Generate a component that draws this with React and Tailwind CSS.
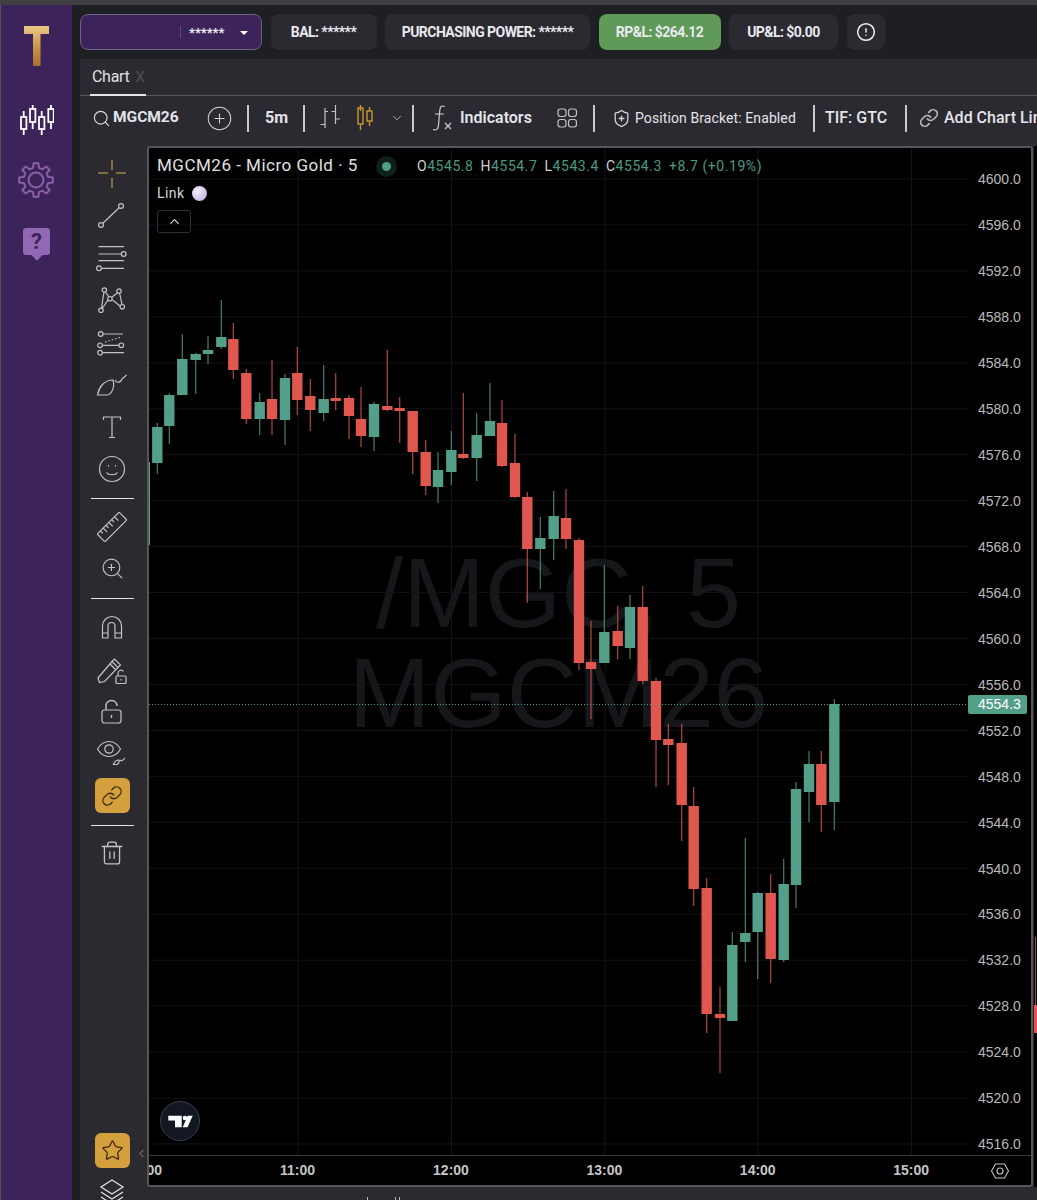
import { Search, CirclePlus, ChevronDown, ChevronUp, ChevronLeft, ShieldPlus, Link as LinkIcon, CircleAlert, Trash2, Star, ZoomIn } from 'lucide-react';

const roboto = "font-['Roboto',sans-serif]";
const arial = "font-['Liberation_Sans',sans-serif]";

// [color, x, wickTop, bodyTop, bodyBottom, wickBottom]
const candles = [
  ['g', 157.3, 423, 427, 463, 474], ['g', 169.3, 393, 395, 426, 444], ['g', 182.3, 334, 359, 395, 395],
  ['g', 195.7, 353, 354, 360, 394], ['g', 208, 336, 350, 354, 364], ['g', 221.3, 300, 337, 347, 349],
  ['r', 233.3, 323, 339, 370, 379], ['r', 246.3, 369, 373, 419, 424], ['g', 259.7, 393, 402, 419, 435],
  ['r', 272, 360, 399, 419, 435], ['g', 285, 374, 378, 420, 445], ['r', 297.3, 347, 373, 400, 415],
  ['r', 310.3, 379, 396, 410, 431], ['g', 323.7, 365, 399, 413, 421], ['r', 335.7, 373, 398, 401, 410],
  ['r', 349, 395, 398, 416, 439], ['r', 361, 387, 419, 436, 447], ['g', 374, 402, 404, 437, 451],
  ['r', 387.3, 350, 406, 410, 411], ['r', 399.7, 397, 408, 411, 443], ['r', 412.7, 411, 411, 452, 474],
  ['r', 425.7, 440, 452, 486, 495], ['g', 438, 452, 470, 487, 503], ['g', 451.3, 431, 450, 472, 485],
  ['r', 463.3, 393, 454, 458, 459], ['g', 476.7, 413, 435, 458, 481], ['g', 490, 383, 421, 436, 436],
  ['r', 502, 400, 423, 466, 467], ['r', 515, 434, 463, 497, 498], ['r', 527.3, 492, 497, 549, 603],
  ['g', 540.3, 517, 538, 549, 589], ['g', 553.7, 491, 516, 539, 560], ['r', 566, 489, 518, 539, 549],
  ['r', 579, 538, 540, 663, 670], ['r', 591, 621, 662, 669, 719], ['g', 604.3, 565, 632, 663, 663],
  ['r', 617.7, 606, 631, 646, 659], ['g', 630, 595, 607, 648, 659], ['r', 642.7, 586, 607, 681, 684],
  ['r', 656, 678, 681, 740, 787], ['r', 668.3, 724, 739, 745, 785], ['r', 681.7, 724, 743, 805, 841],
  ['r', 693.7, 787, 806, 889, 906], ['r', 706.7, 878, 888, 1014, 1033], ['r', 720, 987, 1014, 1018, 1073],
  ['g', 732.3, 932, 945, 1021, 1021], ['g', 745.3, 838, 933, 942, 962], ['g', 757.7, 892, 893, 932, 979],
  ['r', 770.7, 874, 893, 959, 983], ['g', 783.7, 859, 884, 960, 962], ['g', 796, 782, 789, 885, 908],
  ['g', 809, 751, 764, 792, 822], ['r', 821.3, 751, 764, 805, 832], ['g', 834.3, 699, 704, 802, 830],
];

const prices = ['4600.0', '4596.0', '4592.0', '4588.0', '4584.0', '4580.0', '4576.0', '4572.0', '4568.0', '4564.0', '4560.0', '4556.0', '4552.0', '4548.0', '4544.0', '4540.0', '4536.0', '4532.0', '4528.0', '4524.0', '4520.0', '4516.0'];

function gearPath(cx, cy, outer, inner, teeth) {
  let d = '';
  const step = (Math.PI * 2) / teeth;
  for (let i = 0; i < teeth; i++) {
    const a = i * step - Math.PI / 2;
    const pts = [[inner, a - step * 0.3], [outer, a - step * 0.18], [outer, a + step * 0.18], [inner, a + step * 0.3]];
    pts.forEach(([r, t]) => {
      d += `${d ? 'L' : 'M'}${(cx + r * Math.cos(t)).toFixed(2)} ${(cy + r * Math.sin(t)).toFixed(2)} `;
    });
  }
  return d + 'Z';
}

function Ico({ children, className = '' }) {
  return (
    <svg viewBox="0 0 36 36" fill="none" stroke="currentColor" strokeWidth="1.2" className={`w-9 h-9 shrink-0 text-[#c4c4c6] ${className}`}>
      {children}
    </svg>
  );
}

function Sep({ className = '' }) {
  return <div className={`w-[2px] h-[27px] bg-[#c9c9cc] shrink-0 ${className}`} />;
}

function ToolSep({ className = '' }) {
  return <div className={`w-[43px] h-px bg-[#e8e0e6] shrink-0 ${className}`} />;
}

function Pill({ className = '', children }) {
  return (
    <div className={`h-9 rounded-lg bg-[#2a2a30] flex items-center justify-center text-[14px] font-bold tracking-[-0.55px] text-[#e9e9ee] shrink-0 ${className}`}>
      {children}
    </div>
  );
}

function Sidebar() {
  return (
    <div className="w-[72px] h-full bg-[#3c2359] border-l border-[#55525c] shrink-0">
      <svg viewBox="0 0 71 70" className="w-[71px] h-[70px] mt-[16px]">
        <defs>
          <linearGradient id="goldT" x1="0" y1="0" x2="0" y2="1">
            <stop offset="0" stopColor="#edca86" />
            <stop offset="0.5" stopColor="#c9974f" />
            <stop offset="1" stopColor="#a8702f" />
          </linearGradient>
        </defs>
        <path d="M23 5 H48 V13 H39.5 V45 H32 V13 H23 Z" fill="url(#goldT)" />
      </svg>
      <svg viewBox="0 0 36 32" fill="none" stroke="#fff" strokeWidth="1.8" className="w-9 h-8 ml-[17px] mt-[14px]">
        <path d="M5.7 6V30 M14.7 0V24 M23.7 6V30 M33 0V24" />
        <rect x="3" y="12" width="5.4" height="12" fill="#3c2359" />
        <rect x="12" y="4" width="5.4" height="13" fill="#3c2359" />
        <rect x="21" y="12" width="5.4" height="12" fill="#3c2359" />
        <rect x="30.3" y="4" width="5.4" height="13" fill="#3c2359" />
      </svg>
      <svg viewBox="0 0 40 40" fill="none" stroke="#8a5fa8" strokeWidth="2" className="w-10 h-10 ml-[15px] mt-[23px]">
        <path d={gearPath(20, 20, 17, 12.5, 8)} strokeLinejoin="round" />
        <circle cx="20" cy="20" r="7.5" />
      </svg>
      <div className="relative w-[27px] h-[27px] ml-[22px] mt-[28px] rounded-[3px] bg-[#9268b4] flex items-center justify-center">
        <span className={`${roboto} text-[#3c2359] text-[22px] font-bold leading-none`}>?</span>
        <div className="absolute -bottom-[4px] left-[10px] w-[8px] h-[8px] rotate-45 bg-[#9268b4]" />
      </div>
    </div>
  );
}

function TopBar() {
  return (
    <div className={`${roboto} h-[54px] flex items-center gap-[8.5px] pl-[8px] bg-[#1e1f23]`}>
      <div className="w-[182px] h-9 rounded-lg bg-[#3c2359] border border-[#6f6085] flex items-center shrink-0">
        <div className="ml-[99px] w-px h-[12px] bg-[#5d4a74]" />
        <span className="ml-[8px] w-[36px] text-[13px] font-bold leading-none text-[#f0eef4]">******</span>
        <div className="ml-[15px] mt-[2px] w-0 h-0 border-x-[4px] border-x-transparent border-t-[4px] border-t-white" />
      </div>
      <Pill className="w-[106px]">BAL:&nbsp;******</Pill>
      <Pill className="w-[205px]">PURCHASING POWER:&nbsp;******</Pill>
      <Pill className="w-[122px] !bg-[#5f9a58]">RP&amp;L: $264.12</Pill>
      <Pill className="w-[109px]">UP&amp;L: $0.00</Pill>
      <Pill className="w-[38px]"><CircleAlert size={20} color="#f2f2f2" strokeWidth={1.8} /></Pill>
    </div>
  );
}

function ChartToolbar() {
  return (
    <div className={`${roboto} h-[50px] pb-[6px] flex items-center text-[#e4e4ea] overflow-hidden whitespace-nowrap`}>
      <Search size={19} strokeWidth={1.5} className="ml-[12px] shrink-0" color="#d8d8dc" />
      <span className="ml-[2px] w-[65px] text-[15.5px] font-bold shrink-0">MGCM26</span>
      <CirclePlus size={27} strokeWidth={0.9} className="ml-[28px] shrink-0" color="#d8d8dc" />
      <Sep className="ml-[14px]" />
      <span className="ml-[16px] w-[24px] text-[16px] font-bold shrink-0">5m</span>
      <Sep className="ml-[14px]" />
      <svg viewBox="0 0 22 26" fill="none" stroke="#c4c4c6" strokeWidth="1.2" className="w-[22px] h-[26px] ml-[14px] shrink-0">
        <path d="M6 3V23 M1.5 19.5H6 M6 6.5H9 M16.5 0V19 M12.5 6.5H16.5 M16.5 14H21" />
      </svg>
      <svg viewBox="0 0 18 26" fill="none" stroke="#c9972f" strokeWidth="1.4" className="w-[18px] h-[26px] ml-[16px] shrink-0">
        <path d="M3.5 0V6 M3.5 19V25 M12.5 2V6 M12.5 16V21" />
        <rect x="1" y="3" width="5" height="16" />
        <rect x="10" y="6" width="5" height="10" />
      </svg>
      <ChevronDown size={14} strokeWidth={1.5} color="#c4c4c6" className="ml-[15px] shrink-0" />
      <Sep className="ml-[8px]" />
      <svg viewBox="0 0 26 28" fill="none" stroke="#d0d0d2" strokeWidth="1.2" className="w-[26px] h-[28px] ml-[16px] shrink-0">
        <path d="M15 2.5C11 1 10 3 9.7 7L8.5 21C8.2 25 7 26.5 3 25.5 M5 10H14 M15 19L21 25 M21 19L15 25" />
      </svg>
      <span className="ml-[4px] w-[73px] text-[16px] font-semibold shrink-0">Indicators</span>
      <svg viewBox="0 0 20 20" fill="none" stroke="#c4c4c6" strokeWidth="1.2" className="w-5 h-5 ml-[24px] shrink-0">
        <rect x="1" y="1" width="8" height="7.5" rx="2.4" />
        <rect x="11.5" y="1" width="8" height="7.5" rx="2.4" />
        <rect x="1" y="11.5" width="8" height="7.5" rx="2.4" />
        <rect x="11.5" y="11.5" width="8" height="7.5" rx="2.4" />
      </svg>
      <Sep className="ml-[16px]" />
      <ShieldPlus size={19} strokeWidth={1.6} color="#d8d8dc" className="ml-[17px] shrink-0" />
      <span className="ml-[4px] w-[162px] text-[14px] shrink-0 tracking-[0.1px]">Position Bracket: Enabled</span>
      <Sep className="ml-[16px]" />
      <span className="ml-[10px] w-[64px] text-[16px] font-medium shrink-0">TIF: GTC</span>
      <Sep className="ml-[16px]" />
      <LinkIcon size={20} strokeWidth={2} color="#b9b9bc" className="ml-[12px] shrink-0" />
      <span className="ml-[5px] text-[16px] font-medium shrink-0">Add Chart Link</span>
    </div>
  );
}

function ToolColumn() {
  return (
    <div className="relative w-[67px] pr-[3px] shrink-0 flex flex-col items-center">
      <Ico className="mt-[9px] !text-[#a5813f]">
        <path d="M4 18H14 M22 18H32 M18 5V15 M18 23V33" strokeWidth="1.5" />
      </Ico>
      <Ico className="mt-[6px]">
        <circle cx="7" cy="28" r="2.4" /><circle cx="27" cy="9" r="2.4" /><path d="M8.8 26.2L25.2 10.8" />
      </Ico>
      <Ico className="mt-[7px]">
        <path d="M4.5 6.7H30 M4.5 14H27 M4.5 20.7H30 M7.5 28.3H30" />
        <circle cx="29.7" cy="14" r="2.4" /><circle cx="5" cy="28.3" r="2.4" />
      </Ico>
      <Ico className="mt-[6px]">
        <path d="M7.5 26L10 10 M11.5 10L15 15 M18 15L24 10.5 M25.6 11L28 22.5 M26 24L18.5 18 M14 18L8.5 26" />
        <circle cx="10.3" cy="8" r="2.2" /><circle cx="25" cy="9" r="2.2" /><circle cx="16" cy="16.7" r="2.2" />
        <circle cx="7" cy="28.3" r="2.2" /><circle cx="28.3" cy="24.7" r="2.2" />
      </Ico>
      <Ico className="mt-[7px]">
        <path d="M9 9H29 M9 20.3H25 M9 27.7H30" />
        <circle cx="6.7" cy="9" r="2.3" /><circle cx="6" cy="20.3" r="2.3" /><circle cx="27.3" cy="20.3" r="2.3" /><circle cx="6" cy="27.7" r="2.3" />
        <path d="M11 17L27.5 12" strokeDasharray="1.5 2" />
      </Ico>
      <Ico className="mt-[6px]">
        <path d="M3.5 28C5 20 10 13 19 13C21 20 18 28 12 28H3.5Z M21 13C23 17 27 15 28 12L32.5 8" />
      </Ico>
      <Ico className="mt-[7px]">
        <path d="M9.5 10V7H26.5V10 M18 7V27 M15 27.5H21" />
      </Ico>
      <Ico className="mt-[5px]">
        <circle cx="18" cy="18" r="12.5" /><path d="M12.5 21.5C14.5 24.5 21.5 24.5 23.5 21.5 M14.5 14V15.5 M21.5 14V15.5" />
      </Ico>
      <ToolSep className="mt-[11px]" />
      <Ico className="mt-[10px]">
        <g transform="rotate(-45 18 18)">
          <rect x="2.5" y="12.5" width="31" height="11" rx="1" />
          <path d="M7 12.5V16 M11 12.5V18 M15 12.5V16 M19 12.5V18 M23 12.5V16 M27 12.5V18" />
        </g>
      </Ico>
      <div className="w-9 h-9 mt-[5px] shrink-0 flex items-center justify-center">
        <ZoomIn size={25} strokeWidth={1.1} color="#c4c4c6" />
      </div>
      <ToolSep className="mt-[12px]" />
      <Ico className="mt-[10px]">
        <path d="M8.5 29V17a9.5 9.5 0 0 1 19 0V29H21V17a3.5 3.5 0 0 0 -7 0V29Z M8.5 24H14 M21 24H27.5" />
      </Ico>
      <Ico className="mt-[7px]">
        <path d="M4 26L5.5 30.5L10.5 29.5L24 15.5L18 9.5Z M16 12L21.5 17.5 M18 9.5L20.5 7L26.5 13L24 15.5" />
        <rect x="22" y="24" width="10" height="7.5" rx="1" fill="#2a2a30" />
        <path d="M24 24V21a3 3 0 0 1 5.5 -1.5 M27 27V28.5" />
      </Ico>
      <Ico className="mt-[7px]">
        <rect x="8" y="15" width="19" height="13" rx="2.5" /><path d="M12 15V11a5.5 5.5 0 0 1 11 0 M17.5 20V23" strokeWidth="1.4" />
      </Ico>
      <Ico className="mt-[4px]">
        <path d="M3.5 14C7 8 11 6.5 15 6.5C19 6.5 23 8 26.5 14C23 20 19 21.5 15 21.5C11 21.5 7 20 3.5 14Z" /><circle cx="15" cy="14" r="4.2" />
        <path d="M19.5 29.5C20.5 26 22.5 25 25 25C25.5 27.5 24 29.5 22.5 29.5Z M26 25C27 26.5 29 25.5 31 23" />
      </Ico>
      <div className="w-[35px] h-[35px] mt-[7px] rounded-md bg-[#d4a03e] flex items-center justify-center shrink-0">
        <LinkIcon size={22} strokeWidth={1.4} color="#35280f" />
      </div>
      <ToolSep className="mt-[12px]" />
      <div className="w-9 h-9 mt-[9px] shrink-0 flex items-center justify-center">
        <Trash2 size={26} strokeWidth={1.2} color="#c4c4c6" />
      </div>
      <div className="w-[35px] h-[35px] mt-[262px] rounded-md bg-[#d4a03e] flex items-center justify-center shrink-0">
        <Star size={23} strokeWidth={1.3} color="#35280f" />
      </div>
      <Ico className="mt-[4px] !text-[#e6e6e8]">
        <path d="M18 8L29 15L18 22L7 15Z M7 20L18 27L29 20 M7 25L18 32L29 25" />
      </Ico>
      <ChevronLeft size={13} strokeWidth={1.5} color="#a8a8ac" className="absolute left-[55px] top-[1001px]" />
    </div>
  );
}

function Plot() {
  return (
    <div className="relative w-[819px] h-[1007px] shrink-0 overflow-hidden">
      <div className={`${arial} absolute left-0 top-[395px] w-full text-center text-[98px] leading-[100px] text-[#16171a]`}>
        <div>/MGC, 5</div>
        <div>MGCM26</div>
      </div>
      <svg viewBox="149 148 819 1007" className="absolute inset-0 w-full h-full">
        {prices.map((p, i) => (
          <rect key={p} x="149" y={178.5 + i * 45.95} width="819" height="1" fill="#14151a" fillOpacity="0.85" />
        ))}
        {[297.5, 451, 604.5, 757.5, 911].map((x) => (
          <rect key={x} x={x} y="148" width="1" height="1007" fill="#14151a" />
        ))}
        <rect x="149" y="462" width="1" height="83" fill="#549f89" />
        {candles.map(([c, x, wt, bt, bb, wb]) => (
          <g key={x} fill={c === 'g' ? '#549f89' : '#df574f'}>
            <rect x={x - 0.6} y={wt} width="1.2" height={wb - wt} fillOpacity="0.8" />
            <rect x={x - 5.2} y={bt} width="10.4" height={bb - bt} />
          </g>
        ))}
        <line x1="149" y1="704.5" x2="968" y2="704.5" stroke="#549f89" strokeDasharray="1 2" />
      </svg>

      <div className={`${roboto} absolute left-[8px] top-[5px] flex items-center h-[26px] whitespace-nowrap`}>
        <span className="w-[219px] text-[17px] text-[#e0e0e0] tracking-[0.5px]">MGCM26 - Micro Gold · 5</span>
        <span className="w-[21px] h-[21px] rounded-full bg-[#0f1f1c] flex items-center justify-center">
          <span className="w-[9px] h-[9px] rounded-full bg-[#4f9f88]" />
        </span>
        <span className="ml-[20px] text-[14px] tracking-[0.55px] text-[#4a9a83]">
          <span className="text-[#cfcfcf]">O</span>4545.8 <span className="text-[#cfcfcf] ml-[3px]">H</span>4554.7 <span className="text-[#cfcfcf] ml-[3px]">L</span>4543.4 <span className="text-[#cfcfcf] ml-[3px]">C</span>4554.3 <span className="ml-[3px]">+8.7 (+0.19%)</span>
        </span>
      </div>
      <div className={`${roboto} absolute left-[8px] top-[35px] flex items-center`}>
        <span className="text-[14px] text-[#d6d6d6] tracking-[0.4px]">Link</span>
        <span className="ml-[8px] w-[15px] h-[15px] rounded-full bg-[radial-gradient(circle_at_35%_35%,#f4eefa,#bba6dc)]" />
      </div>
      <div className="absolute left-[8px] top-[62px] w-[34px] h-[23px] rounded-[3px] border border-[#2c2f38] flex items-center justify-center">
        <ChevronUp size={15} strokeWidth={1.8} color="#e4e4e4" />
      </div>
      <svg viewBox="0 0 40 40" className="absolute left-[11px] top-[953px] w-10 h-10">
        <circle cx="20" cy="20" r="19.5" fill="#131722" stroke="#3a3f4d" />
        <path d="M8.3 14.7H21.7V26.3H15V19.5H8.3Z M27.7 14.7H32.7L27.5 26.3H22.7Z" fill="#fff" />
        <circle cx="25" cy="17" r="2.3" fill="#fff" />
      </svg>
    </div>
  );
}

function ChartFrame() {
  return (
    <div className="w-[886px] h-[1041px] shrink-0 border-2 border-[#55555a] rounded-[3px] bg-black flex flex-col overflow-hidden">
      <div className="flex h-[1007px] shrink-0">
        <Plot />
        <div className={`${arial} relative flex-1 pt-[9px] text-[14px] text-[#b9b9bb]`}>
          {prices.map((p) => (
            <div key={p} className="h-[45.95px] flex items-center pl-[10px]">{p}</div>
          ))}
          <div className="absolute left-0 top-[547px] w-[59px] h-[19px] rounded-[2px] bg-[#549f89] text-white flex items-center pl-[10px]">4554.3</div>
        </div>
      </div>
      <div className="flex flex-1 border-t border-[#36363b]">
        <div className={`${arial} w-[819px] flex items-center overflow-hidden text-[14px] font-bold text-[#c6c6c8]`}>
          {['10:00', '11:00', '12:00', '13:00', '14:00', '15:00'].map((t, i) => (
            <div key={t} className={`w-[153.4px] shrink-0 text-center ${i === 0 ? 'ml-[-81.5px]' : ''}`}>{t}</div>
          ))}
        </div>
        <div className="flex-1 flex items-center justify-center">
          <svg viewBox="0 0 20 18" fill="none" stroke="#c4c4c6" strokeWidth="1.1" className="w-5 h-[18px]">
            <path d="M1.5 9L5.5 2H14.5L18.5 9L14.5 16H5.5Z" /><circle cx="10" cy="9" r="3" />
          </svg>
        </div>
      </div>
    </div>
  );
}

export default function App() {
  return (
    <div className="w-[1037px] h-[1200px] flex flex-col overflow-hidden bg-[#1e1f23]">
      <div className="h-[5px] bg-[#3f3f41] shrink-0" />
      <div className="flex flex-1 min-h-0">
        <Sidebar />
        <div className="flex-1 min-w-0 flex flex-col">
          <TopBar />
          <div className="ml-[8px] flex-1 min-h-0 bg-[#2a2a30] flex flex-col overflow-hidden">
            <div className={`${roboto} h-[37px] shrink-0 flex items-end border-b border-[#55555a]`}>
              <div className="ml-[10px] w-[56px] h-[36px] -mb-px border-b-2 border-[#e6e6e6] flex items-center pl-[2px] text-[16px] text-[#e0e0e4] tracking-[-0.3px]">
                Chart<span className="ml-[6px] text-[15px] text-[#4f4f55]">X</span>
              </div>
            </div>
            <ChartToolbar />
            <div className="flex flex-1 min-h-0">
              <ToolColumn />
              <div className="flex flex-col shrink-0">
                <ChartFrame />
                <div className="flex mt-[10px] h-[3px] ml-[220px] gap-[27px]">
                  <div className="w-px bg-[#bbb]" /><div className="w-px bg-[#bbb]" /><div className="w-px bg-[#bbb] -ml-[24px]" />
                </div>
              </div>
              <div className="ml-px flex-1 h-[1041px] bg-black">
                <svg viewBox="0 0 3 1041" className="w-full h-full" preserveAspectRatio="none">
                  <rect x="0" y="859" width="3" height="28" fill="#df574f" />
                  <rect x="1" y="791" width="1" height="68" fill="#a8433d" />
                </svg>
              </div>
            </div>
          </div>
        </div>
      </div>
    </div>
  );
}
